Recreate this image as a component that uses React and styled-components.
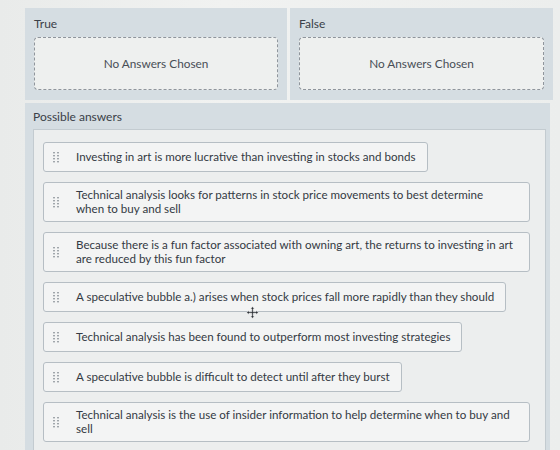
import React from "react";
import styled, { createGlobalStyle } from "styled-components";

const Global = createGlobalStyle`
  html, body { margin: 0; padding: 0; background: #eef0ef; }
  body { font-family: Lato, "Open Sans", "Liberation Sans", sans-serif; color: #3a4049; }
`;

const Page = styled.div`
  width: 560px;
  height: 450px;
  overflow: hidden;
  padding: 8px 7px 0 25px;
  box-sizing: border-box;
  position: relative;
  background: linear-gradient(90deg, #e9ebea 0%, #f1f2f1 40%, #eceeed 100%);
`;

const TopRow = styled.div`
  display: grid;
  grid-template-columns: 262px 263px;
  gap: 3px;
`;

const Zone = styled.div`
  background: #d5dde2;
  padding: 9px 9px 9px 9px;
  height: 92px;
  box-sizing: border-box;
`;

const ZoneTitle = styled.div`
  font-size: 12px;
  color: #3a4048;
  margin-bottom: 6px;
  line-height: 14px;
`;

const DropBox = styled.div`
  border: 1.5px dashed #8f959c;
  border-radius: 4px;
  background: #eef0ef;
  height: 53px;
  box-sizing: border-box;
  display: flex;
  align-items: center;
  justify-content: center;
  font-size: 11.8px;
  color: #484e56;
`;

const AnswersZone = styled.div`
  background: #d5dde2;
  margin-top: 3px;
  padding: 7px 4px 0 8px;
  width: 525px;
  box-sizing: border-box;
  height: 360px;
`;

const AnswersTitle = styled.div`
  font-size: 12px;
  color: #3a4048;
  line-height: 14px;
  margin-bottom: 5px;
`;

const AnswersBox = styled.div`
  background: #eceeee;
  border: 1px solid #c3cbd0;
  border-bottom: none;
  padding: 12px 10px 20px 9px;
  display: flex;
  flex-direction: column;
  align-items: flex-start;
  gap: 10px;
  height: 340px;
  box-sizing: border-box;
`;

const Item = styled.div`
  display: flex;
  align-items: center;
  background: #f3f4f4;
  border: 1px solid #b6bec4;
  border-radius: 3px;
  padding: ${(p) => (p.$two ? "5px" : "7px")} 11px ${(p) => (p.$two ? "5px" : "7px")} 9px;
  width: ${(p) => (p.$two ? "487px" : "auto")};
  box-sizing: border-box;
  min-height: ${(p) => (p.$two ? "40px" : "29px")};
`;

const Handle = styled.svg`
  flex: none;
  width: 7px;
  height: 11px;
  margin-right: 16px;
`;

const ItemText = styled.span`
  font-size: 11.6px;
  line-height: 14px;
  color: #343a43;
  white-space: nowrap;
`;

const Line = styled.span`
  display: block;
`;

const Cursor = styled.svg`
  position: absolute;
  left: 246px;
  top: 306px;
  width: 13px;
  height: 13px;
`;

const Grip = () => (
  <Handle viewBox="0 0 7 11">
    {[0, 3, 6, 9].map((y) =>
      [1, 5].map((x) => (
        <rect key={`${x}-${y}`} x={x - 0.7} y={y} width="1.4" height="1.4" fill="#7d858c" />
      ))
    )}
  </Handle>
);

const answers = [
  ["Investing in art is more lucrative than investing in stocks and bonds"],
  ["Technical analysis looks for patterns in stock price movements to best determine", "when to buy and sell"],
  ["Because there is a fun factor associated with owning art, the returns to investing in art", "are reduced by this fun factor"],
  ["A speculative bubble a.) arises when stock prices fall more rapidly than they should"],
  ["Technical analysis has been found to outperform most investing strategies"],
  ["A speculative bubble is difficult to detect until after they burst"],
  ["Technical analysis is the use of insider information to help determine when to buy and", "sell"],
];

export default function App() {
  return (
    <>
      <Global />
      <Page>
        <TopRow>
          <Zone>
            <ZoneTitle>True</ZoneTitle>
            <DropBox>No Answers Chosen</DropBox>
          </Zone>
          <Zone>
            <ZoneTitle>False</ZoneTitle>
            <DropBox>No Answers Chosen</DropBox>
          </Zone>
        </TopRow>
        <AnswersZone>
          <AnswersTitle>Possible answers</AnswersTitle>
          <AnswersBox>
            {answers.map((lines, i) => (
              <Item key={i} $two={lines.length > 1}>
                <Grip />
                <ItemText>
                  {lines.map((l, j) => (
                    <Line key={j}>{l}</Line>
                  ))}
                </ItemText>
              </Item>
            ))}
          </AnswersBox>
        </AnswersZone>
        <Cursor viewBox="0 0 13 13">
          <path d="M6.5 0.5 L8.5 3 H7.3 V5.7 H10 V4.5 L12.5 6.5 L10 8.5 V7.3 H7.3 V10 H8.5 L6.5 12.5 L4.5 10 H5.7 V7.3 H3 V8.5 L0.5 6.5 L3 4.5 V5.7 H5.7 V3 H4.5 Z" fill="#2f3439" stroke="#fff" strokeWidth="0.6" />
        </Cursor>
      </Page>
    </>
  );
}
